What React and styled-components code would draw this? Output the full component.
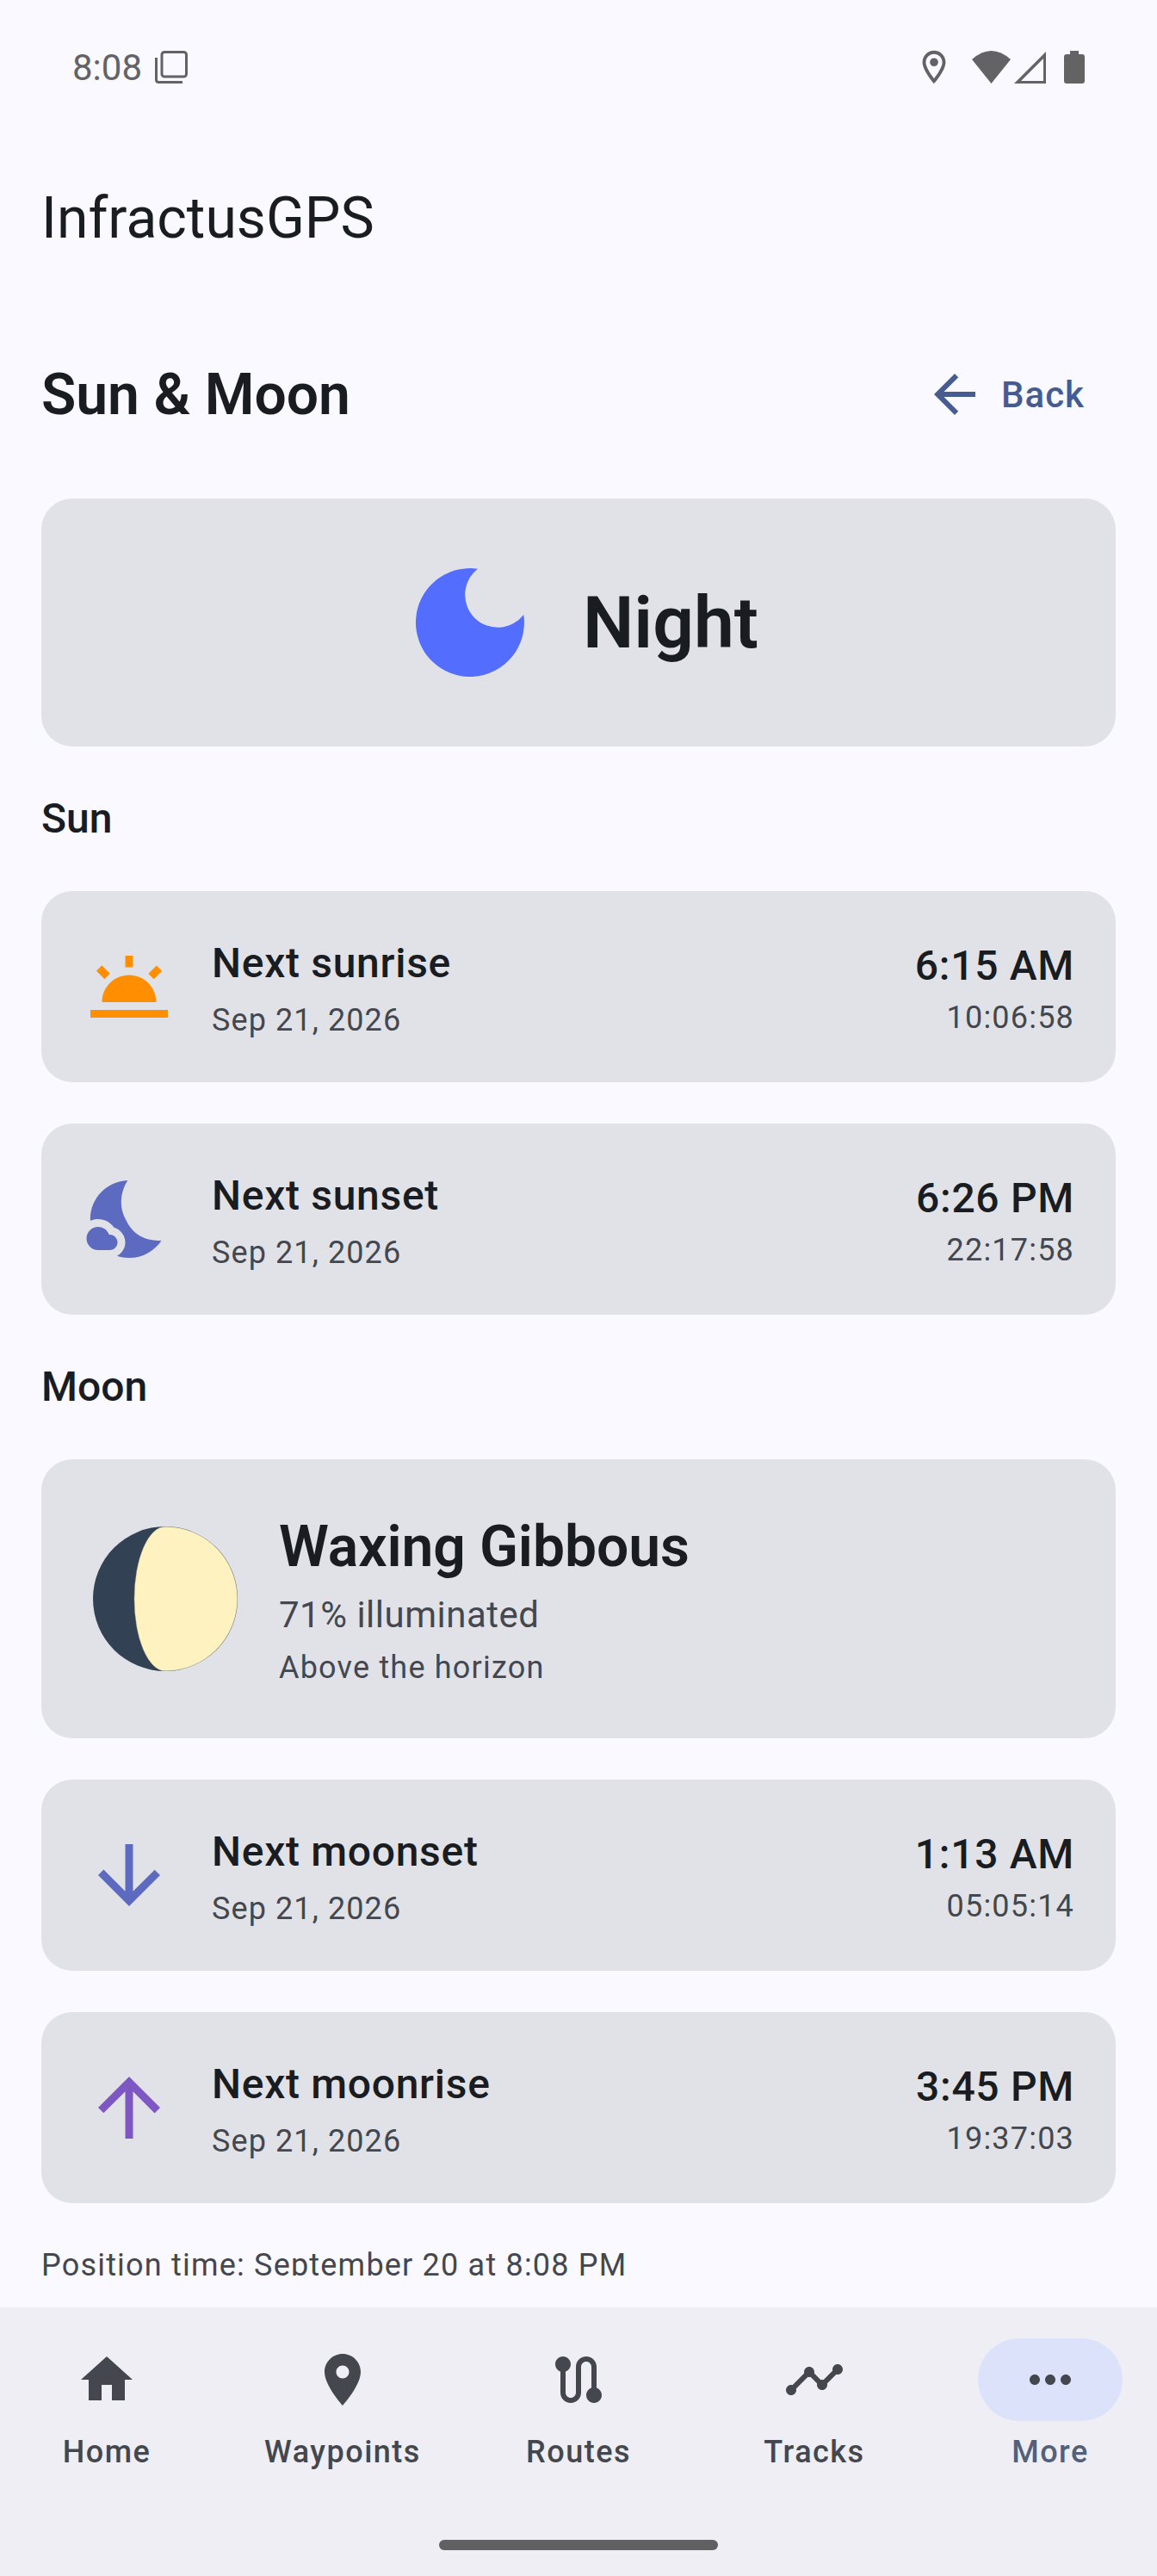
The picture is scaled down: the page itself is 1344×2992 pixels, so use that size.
import React from 'react'
import styled, { createGlobalStyle } from 'styled-components'

const GlobalStyle = createGlobalStyle`
  html, body { margin: 0; padding: 0; background: #f9f9ff; }
  * { box-sizing: border-box; }
`

const Screen = styled.div`
  width: 1344px;
  height: 2992px;
  display: flex;
  flex-direction: column;
  background: #f9f9ff;
  font-family: Roboto, "Liberation Sans", sans-serif;
  color: #191c20;
  overflow: hidden;
`

const StatusBar = styled.div`
  height: 156px;
  flex: none;
  padding: 48px 84px 0 84px;
  display: flex;
  justify-content: space-between;
  align-items: flex-start;
  color: #636366;
`

const StatusLeft = styled.div`
  display: flex;
  align-items: center;
  height: 60px;
  gap: 15px;
  font-size: 42px;
`

const StatusRight = styled.div`
  display: flex;
  align-items: center;
  height: 60px;
`

const AppTitle = styled.div`
  flex: none;
  height: 96px;
  padding-left: 48px;
  font-size: 66px;
  line-height: 96px;
  margin-top: 50px;
`

const Content = styled.div`
  flex: none;
  height: 2341px;
  padding: 0 48px;
  overflow: hidden;
  display: flex;
  flex-direction: column;
`

const HeaderRow = styled.div`
  flex: none;
  display: flex;
  justify-content: space-between;
  align-items: center;
  height: 120px;
  margin-top: 96px;
  margin-bottom: 61px;
`

const PageTitle = styled.div`
  font-size: 66px;
  font-weight: 600;
`

const BackButton = styled.div`
  display: flex;
  align-items: center;
  gap: 18px;
  padding-right: 36px;
  color: #465c90;
  font-size: 42px;
  font-weight: 500;
  letter-spacing: 1px;
`

const PhaseCard = styled.div`
  flex: none;
  height: 288px;
  border-radius: 36px;
  background: #e1e2e8;
  display: flex;
  align-items: center;
  justify-content: center;
  gap: 68px;
  padding-left: 20px;
`

const PhaseLabel = styled.div`
  font-size: 84px;
  font-weight: 600;
`

const SectionLabel = styled.div`
  flex: none;
  height: 72px;
  margin: 48px 0;
  font-size: 48px;
  line-height: 72px;
  font-weight: 500;
`

const EventCard = styled.div`
  flex: none;
  height: 222px;
  border-radius: 36px;
  background: #e1e2e8;
  display: flex;
  align-items: center;
  padding: 0 48px;
  margin-bottom: ${p => (p.$last ? 0 : 48)}px;
`

const EventText = styled.div`
  flex: 1;
  margin-left: 42px;
`

const EventName = styled.div`
  font-size: 48px;
  line-height: 72px;
  font-weight: 500;
  letter-spacing: 0.7px;
`

const EventDate = styled.div`
  font-size: 36px;
  line-height: 54px;
  letter-spacing: 1.1px;
  color: #44474e;
  transform: translateY(2.5px);
`

const EventTimes = styled.div`
  text-align: right;
`

const EventTime = styled.div`
  font-size: 48px;
  line-height: 72px;
  font-weight: 500;
  letter-spacing: 0.7px;
  transform: translateY(2.5px);
`

const EventCountdown = styled.div`
  font-size: 36px;
  line-height: 54px;
  letter-spacing: 1.2px;
  color: #44474e;
`

const MoonCard = styled.div`
  flex: none;
  height: 324px;
  border-radius: 36px;
  background: #e1e2e8;
  display: flex;
  align-items: center;
  padding: 0 60px;
  gap: 48px;
  margin-bottom: 48px;
`

const MoonInfo = styled.div`
  padding-top: 4px;
`

const MoonName = styled.div`
  font-size: 66px;
  line-height: 90px;
  font-weight: 600;
  letter-spacing: -0.1px;
  margin-bottom: 4px;
`

const MoonPercent = styled.div`
  font-size: 42px;
  line-height: 60px;
  letter-spacing: 0.5px;
  margin-bottom: 1px;
  color: #44474e;
`

const MoonHorizon = styled.div`
  font-size: 36px;
  line-height: 60px;
  letter-spacing: 1.2px;
  color: #44474e;
`

const PositionTime = styled.div`
  flex: none;
  margin-top: 45px;
  font-size: 36px;
  line-height: 54px;
  letter-spacing: 1.2px;
  color: #44474e;
`

const BottomNav = styled.div`
  margin-top: auto;
  height: 312px;
  flex: none;
  background: #eeeef4;
  position: relative;
  display: flex;
  justify-content: space-between;
  padding: 36px 40px 0;
`

const NavItem = styled.div`
  width: 168px;
  display: flex;
  flex-direction: column;
  align-items: center;
  color: #44474e;
`

const NavPill = styled.div`
  width: 168px;
  height: 96px;
  border-radius: 48px;
  display: flex;
  align-items: center;
  justify-content: center;
  background: ${p => (p.$active ? '#dce2f9' : 'transparent')};
`

const NavLabel = styled.div`
  margin-top: 12px;
  font-size: 36px;
  line-height: 48px;
  font-weight: 500;
  letter-spacing: 1.5px;
  white-space: nowrap;
  color: ${p => (p.$active ? '#545f78' : '#44474e')};
`

const HomeBar = styled.div`
  position: absolute;
  left: 510px;
  bottom: 30px;
  width: 324px;
  height: 12px;
  border-radius: 6px;
  background: #606063;
`

const Icon = ({ d, size = 72, color = 'currentColor' }) => (
  <svg width={size} height={size} viewBox="0 0 24 24" fill={color} style={{ flex: 'none' }}>
    {[].concat(d).map((p, i) => <path key={i} d={p} />)}
  </svg>
)

const icons = {
  back: 'M20 11H7.83l5.59-5.59L12 4l-8 8 8 8 1.41-1.41L7.83 13H20v-2z',
  twilight: 'M16.955 8.662l2.12-2.122 1.415 1.414-2.122 2.122zM2 18h20v2H2zm9-14h2v3h-2zM3.543 7.925L4.957 6.51l2.121 2.12-1.414 1.415zM5 16h14c0-3.87-3.13-7-7-7s-7 3.13-7 7z',
  nights: [
    'M11.1 12.08c-2.33-4.51-.5-8.48.53-10.07C6.27 2.2 1.98 6.59 1.98 12c0 .14.02.28.02.42.62-.27 1.29-.42 2-.42 1.66 0 3.18.83 4.11 2.15C9.77 14.63 11 16.17 11 18c0 1.52-.87 2.83-2.12 3.51.98.32 2.03.5 3.11.5 3.5 0 6.58-1.8 8.37-4.52-2.36.23-6.98-.3-9.26-5.41z',
    'M7 16h-.18C6.4 14.84 5.3 14 4 14c-1.66 0-3 1.34-3 3s1.34 3 3 3h3c1.1 0 2-.9 2-2s-.9-2-2-2z',
  ],
  down: 'M20 12l-1.41-1.41L13 16.17V4h-2v12.17l-5.58-5.59L4 12l8 8 8-8z',
  up: 'M4 12l1.41 1.41L11 7.83V20h2V7.83l5.58 5.59L20 12l-8-8-8 8z',
  home: 'M10 20v-6h4v6h5v-8h3L12 3 2 12h3v8z',
  place: 'M12 2C8.13 2 5 5.13 5 9c0 5.25 7 13 7 13s7-7.75 7-13c0-3.87-3.13-7-7-7zm0 9.5c-1.38 0-2.5-1.12-2.5-2.5s1.12-2.5 2.5-2.5 2.5 1.12 2.5 2.5-1.12 2.5-2.5 2.5z',
  route: 'M19 15.18V7c0-2.21-1.79-4-4-4s-4 1.79-4 4v10c0 1.1-.9 2-2 2s-2-.9-2-2V8.82C8.16 8.4 9 7.3 9 6c0-1.66-1.34-3-3-3S3 4.34 3 6c0 1.3.84 2.4 2 2.82V17c0 2.21 1.79 4 4 4s4-1.79 4-4V7c0-1.1.9-2 2-2s2 .9 2 2v8.18c-1.16.41-2 1.51-2 2.82 0 1.66 1.34 3 3 3s3-1.34 3-3c0-1.3-.84-2.4-2-2.82z',
  timeline: 'M23 8c0 1.1-.9 2-2 2-.18 0-.35-.02-.51-.07l-3.56 3.55c.05.16.07.34.07.52 0 1.1-.9 2-2 2s-2-.9-2-2c0-.18.02-.36.07-.52l-2.55-2.55c-.16.05-.34.07-.52.07s-.36-.02-.52-.07l-4.55 4.56c.05.16.07.33.07.51 0 1.1-.9 2-2 2s-2-.9-2-2 .9-2 2-2c.18 0 .35.02.51.07l4.56-4.55C8.02 9.36 8 9.18 8 9c0-1.1.9-2 2-2s2 .9 2 2c0 .18-.02.36-.07.52l2.55 2.55c.16-.05.34-.07.52-.07s.36.02.52.07l3.55-3.56C19.02 8.35 19 8.18 19 8c0-1.1.9-2 2-2s2 .9 2 2z',
  more: 'M6 10c-1.1 0-2 .9-2 2s.9 2 2 2 2-.9 2-2-.9-2-2-2zm12 0c-1.1 0-2 .9-2 2s.9 2 2 2 2-.9 2-2-.9-2-2-2zm-6 0c-1.1 0-2 .9-2 2s.9 2 2 2 2-.9 2-2-.9-2-2-2z',
}

const NightIcon = () => (
  <svg width="126" height="126" viewBox="0 0 126 126" style={{ flex: 'none' }}>
    <path fill="#536dfe" d="M72 0.7A63 63 0 1 0 125.3 54A38 38 0 1 1 72 0.7Z" />
  </svg>
)

const MoonDisc = () => (
  <svg width="168" height="168" viewBox="0 0 168 168" style={{ flex: 'none' }}>
    <circle cx="84" cy="84" r="84" fill="#334155" />
    <path fill="#fef3c0" stroke="#a8a890" strokeWidth="0.4" d="M84 0.2A83.8 83.8 0 0 1 84 167.8A36 83.8 0 0 1 84 0.2Z" />
  </svg>
)

const StatusIcons = () => (
  <StatusRight>
    <svg width="46" height="46" viewBox="0 0 24 24" fill="#636366" style={{ marginRight: 21 }}>
      <path d="M12 2C8.13 2 5 5.13 5 9c0 5.25 7 13 7 13s7-7.75 7-13c0-3.87-3.13-7-7-7zm-5 7c0-2.76 2.24-5 5-5s5 2.24 5 5c0 2.88-2.88 7.19-5 9.88C9.92 16.21 7 11.85 7 9z" />
      <circle cx="12" cy="9" r="2.5" />
    </svg>
    <svg width="45" height="38" viewBox="0 0 45 38" fill="#636366">
      <path d="M0 10Q22.5 -10 45 10L22.5 38Z" />
    </svg>
    <svg width="38" height="38" viewBox="0 0 38 38" fill="#636366" style={{ marginLeft: 4, marginRight: 20 }}>
      <path d="M37 1V38H0ZM34 9L8 35H34Z" fillRule="evenodd" />
    </svg>
    <svg width="24" height="38" viewBox="0 0 24 38" fill="#636366">
      <path d="M7 0H17V4H21Q24 4 24 7V35Q24 38 21 38H3Q0 38 0 35V7Q0 4 3 4H7Z" />
    </svg>
  </StatusRight>
)

const events = {
  sun: [
    { icon: icons.twilight, color: '#ff8f00', name: 'Next sunrise', time: '6:15 AM', left: '10:06:58' },
    { icon: icons.nights, color: '#5c6bc0', name: 'Next sunset', time: '6:26 PM', left: '22:17:58' },
  ],
  moon: [
    { icon: icons.down, color: '#5c6bc0', name: 'Next moonset', time: '1:13 AM', left: '05:05:14' },
    { icon: icons.up, color: '#7e57c2', name: 'Next moonrise', time: '3:45 PM', left: '19:37:03' },
  ],
}

const navItems = [
  { icon: icons.home, label: 'Home' },
  { icon: icons.place, label: 'Waypoints' },
  { icon: icons.route, label: 'Routes' },
  { icon: icons.timeline, label: 'Tracks' },
  { icon: icons.more, label: 'More', active: true },
]

function Event({ item, last }) {
  return (
    <EventCard $last={last}>
      <Icon d={item.icon} size={108} color={item.color} />
      <EventText>
        <EventName>{item.name}</EventName>
        <EventDate>Sep 21, 2026</EventDate>
      </EventText>
      <EventTimes>
        <EventTime>{item.time}</EventTime>
        <EventCountdown>{item.left}</EventCountdown>
      </EventTimes>
    </EventCard>
  )
}

export default function App() {
  return (
    <Screen>
      <GlobalStyle />
      <StatusBar>
        <StatusLeft>
          8:08
          <svg width="38" height="38" viewBox="0 0 38 38" fill="none" stroke="#636366" strokeWidth="3">
            <rect x="8" y="1.5" width="28.5" height="28.5" rx="3" />
            <path d="M1.5 8V33.5Q1.5 36.5 4.5 36.5H32" />
          </svg>
        </StatusLeft>
        <StatusIcons />
      </StatusBar>
      <AppTitle>InfractusGPS</AppTitle>
      <Content>
        <HeaderRow>
          <PageTitle>Sun &amp; Moon</PageTitle>
          <BackButton>
            <Icon d={icons.back} />
            Back
          </BackButton>
        </HeaderRow>
        <PhaseCard>
          <NightIcon />
          <PhaseLabel>Night</PhaseLabel>
        </PhaseCard>
        <SectionLabel>Sun</SectionLabel>
        <Event item={events.sun[0]} />
        <Event item={events.sun[1]} last />
        <SectionLabel>Moon</SectionLabel>
        <MoonCard>
          <MoonDisc />
          <MoonInfo>
            <MoonName>Waxing Gibbous</MoonName>
            <MoonPercent>71% illuminated</MoonPercent>
            <MoonHorizon>Above the horizon</MoonHorizon>
          </MoonInfo>
        </MoonCard>
        <Event item={events.moon[0]} />
        <Event item={events.moon[1]} last />
        <PositionTime>Position time: September 20 at 8:08 PM</PositionTime>
      </Content>
      <BottomNav>
        {navItems.map(n => (
          <NavItem key={n.label}>
            <NavPill $active={n.active}>
              <Icon d={n.icon} />
            </NavPill>
            <NavLabel $active={n.active}>{n.label}</NavLabel>
          </NavItem>
        ))}
        <HomeBar />
      </BottomNav>
    </Screen>
  )
}
